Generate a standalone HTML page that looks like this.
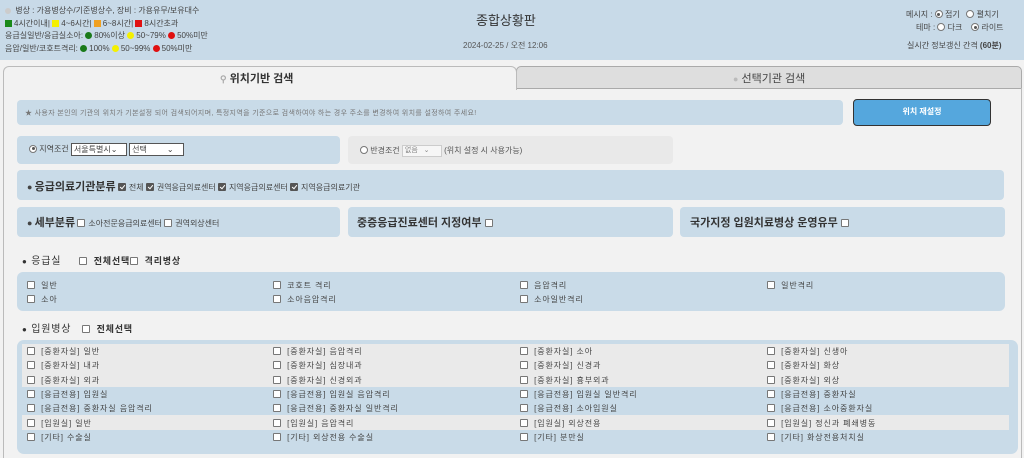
<!DOCTYPE html><html><head><meta charset="utf-8"><style>
*{box-sizing:border-box;margin:0;padding:0}
body{width:1024px;height:458px;overflow:hidden;background:#f2f2f2;font-family:"Liberation Sans","Noto Sans CJK KR",sans-serif;color:#333;position:relative}
.a{position:absolute;white-space:nowrap}
.hdr{position:absolute;left:0;top:0;width:1024px;height:60px;background:#c8dae8}
.s{font-size:8px;color:#444}
.box{position:absolute;background:#c9dbe8;border-radius:4px}
.cb{display:inline-block;width:8px;height:8px;border:1px solid #777;background:#fff;border-radius:1px;vertical-align:-1px;margin-right:3px;position:relative}
.ck{background:#555;border-color:#555}
.ck::after{content:"";position:absolute;left:2px;top:0px;width:2px;height:4px;border:solid #fff;border-width:0 1px 1px 0;transform:rotate(40deg)}
.rd{display:inline-block;width:8px;height:8px;border:1px solid #777;border-radius:50%;background:#fff;vertical-align:-1px;position:relative}
.rd.on::after{content:"";position:absolute;left:1.5px;top:1.5px;width:3px;height:3px;border-radius:50%;background:#555}
.dot{display:inline-block;width:7px;height:7px;border-radius:50%;vertical-align:-1px;margin-right:2px}
.sq{display:inline-block;width:7px;height:7px;vertical-align:-1px;margin-right:2px}
.row{position:absolute;left:22px;width:987px;height:14.3px;font-size:8px;color:#444;letter-spacing:0.9px}
.row span{position:absolute;top:2px}
</style></head><body>
<div class="hdr"></div>
<div class="a s" style="left:5px;top:5px"><span class="dot" style="background:#ccc;width:6px;height:6px"></span> 병상 : 가용병상수/기준병상수, 장비 : 가용유무/보유대수</div>
<div class="a s" style="left:5px;top:18px"><span class="sq" style="background:#1a8a1a"></span>4시간이내| <span class="sq" style="background:#f4f000"></span>4~6시간| <span class="sq" style="background:#f0a020"></span>6~8시간| <span class="sq" style="background:#e01010"></span>8시간초과</div>
<div class="a s" style="left:5px;top:30px">응급실일반/응급실소아: <span class="dot" style="background:#1a7a1a"></span>80%이상 <span class="dot" style="background:#f4f000"></span>50~79% <span class="dot" style="background:#e01010"></span>50%미만</div>
<div class="a s" style="left:5px;top:43px">음압/일반/코호트격리: <span class="dot" style="background:#1a7a1a"></span>100% <span class="dot" style="background:#f4f000"></span>50~99% <span class="dot" style="background:#e01010"></span>50%미만</div>
<div class="a" style="left:476px;top:10px;font-size:13px;color:#333">종합상황판</div>
<div class="a" style="left:463px;top:40px;font-size:8px;color:#555">2024-02-25 / 오전 12:06</div>
<div class="a s" style="left:906px;top:9px">메시지 : <span class="rd on"></span> 접기 &nbsp; <span class="rd"></span> 펼치기</div>
<div class="a s" style="left:916px;top:22px">테마 : <span class="rd"></span> 다크 &nbsp;&nbsp; <span class="rd on"></span> 라이트</div>
<div class="a s" style="left:907px;top:40px">실시간 정보갱신 간격 <b>(60분)</b></div>
<!-- tabs -->
<div class="a" style="left:516px;top:66px;width:506px;height:23px;background:#dedede;border:1px solid #aaa;border-radius:5px 5px 0 0"></div>
<div class="a" style="left:3px;top:88px;width:1019px;height:370px;border-left:1px solid #bbb;border-right:1px solid #bbb"></div>
<div class="a" style="left:3px;top:66px;width:514px;height:24px;background:#f2f2f2;border:1px solid #bbb;border-bottom:none;border-radius:6px 6px 0 0"></div>
<div class="a" style="left:220px;top:70px;font-size:11px;font-weight:bold;color:#333"><span style="color:#aaa;font-size:9px">⚲</span> 위치기반 검색</div>
<div class="a" style="left:733px;top:70px;font-size:11px;color:#444"><span style="color:#bbb;font-size:9px">●</span> 선택기관 검색</div>
<div class="box" style="left:17px;top:100px;width:826px;height:25px"></div>
<div class="a" style="left:25px;top:108px;font-size:7px;color:#777;letter-spacing:0.35px">★ 사용자 본인의 기관의 위치가 기본설정 되어 검색되어지며, 특정지역을 기준으로 검색하여야 하는 경우 주소를 변경하여 위치를 설정하여 주세요!</div>
<div class="a" style="left:853px;top:99px;width:138px;height:27px;background:#55a7dd;border:1.5px solid #333;border-radius:4px;color:#fff;font-size:8px;font-weight:bold;text-align:center;line-height:24px">위치 재설정</div>
<div class="box" style="left:17px;top:136px;width:323px;height:28px"></div>
<div class="a" style="left:29px;top:143px;font-size:8px;color:#444"><span class="rd on"></span> 지역조건 <span style="display:inline-block;width:56px;height:13px;border:1px solid #555;background:#fff;vertical-align:middle;font-size:8px;padding-left:2px;line-height:11px">서울특별시⌄</span> <span style="display:inline-block;width:55px;height:13px;border:1px solid #555;background:#fff;vertical-align:middle;font-size:8px;padding-left:2px;line-height:11px">선택 &nbsp;&nbsp;&nbsp;&nbsp;&nbsp;&nbsp;&nbsp;&nbsp;⌄</span></div>
<div class="box" style="left:348px;top:136px;width:325px;height:28px;background:#e9e9e9"></div>
<div class="a" style="left:360px;top:145px;font-size:8px;color:#555"><span class="rd"></span> 반경조건 <span style="display:inline-block;width:40px;height:12px;border:1px solid #ccc;background:#f6f6f6;vertical-align:middle;font-size:7px;color:#888;padding-left:2px;line-height:10px">없음 &nbsp;&nbsp;⌄</span> (위치 설정 시 사용가능)</div>
<div class="box" style="left:17px;top:170px;width:987px;height:30px"></div>
<div class="a" style="left:27px;top:178px;font-size:8px;color:#444"><span style="font-size:9px">●</span> <b style="font-size:11px;color:#333">응급의료기관분류</b> <span class="cb ck"></span>전체 <span class="cb ck"></span>권역응급의료센터 <span class="cb ck"></span>지역응급의료센터 <span class="cb ck"></span>지역응급의료기관</div>
<div class="box" style="left:17px;top:207px;width:323px;height:30px"></div>
<div class="a" style="left:27px;top:214px;font-size:8px;color:#444"><span style="font-size:9px">●</span> <b style="font-size:11px;color:#333">세부분류</b> <span class="cb"></span>소아전문응급의료센터 <span class="cb"></span>권역외상센터</div>
<div class="box" style="left:348px;top:207px;width:325px;height:30px"></div>
<div class="a" style="left:357px;top:214px;font-size:11px;font-weight:bold;color:#333">중증응급진료센터 지정여부 <span class="cb"></span></div>
<div class="box" style="left:680px;top:207px;width:325px;height:30px"></div>
<div class="a" style="left:690px;top:214px;font-size:11px;font-weight:bold;color:#333">국가지정 입원치료병상 운영유무 <span class="cb"></span></div>
<div class="a" style="left:22px;top:252px;font-size:10px;color:#333;letter-spacing:0.8px"><span style="font-size:8px">●</span> 응급실 &nbsp;&nbsp;&nbsp;&nbsp;<span class="cb"></span> <b style="font-size:9px">전체선택</b><span class="cb"></span> <b style="font-size:9px">격리병상</b></div>
<div class="box" style="left:17px;top:272px;width:988px;height:39px;border-radius:6px"></div>
<div class="row" style="top:278px"><span style="left:5px"><i class="cb"></i> 일반</span><span style="left:251px"><i class="cb"></i> 코호트 격리</span><span style="left:498px"><i class="cb"></i> 음압격리</span><span style="left:745px"><i class="cb"></i> 일반격리</span></div>
<div class="row" style="top:292px"><span style="left:5px"><i class="cb"></i> 소아</span><span style="left:251px"><i class="cb"></i> 소아음압격리</span><span style="left:498px"><i class="cb"></i> 소아일반격리</span></div>
<div class="a" style="left:22px;top:320px;font-size:10px;color:#333;letter-spacing:0.8px"><span style="font-size:8px">●</span> 입원병상 &nbsp;&nbsp;<span class="cb"></span> <b style="font-size:9px">전체선택</b></div>
<div class="box" style="left:17px;top:340px;width:1001px;height:114px;border-radius:7px"></div>
<div class="a" style="left:22px;top:344px;width:987px;height:43px;background:#eaeaea"></div>
<div class="a" style="left:22px;top:415px;width:987px;height:15px;background:#eaeaea"></div>
<div class="row" style="top:344px"><span style="left:5px"><i class="cb"></i> [중환자실] 일반</span><span style="left:251px"><i class="cb"></i> [중환자실] 음압격리</span><span style="left:498px"><i class="cb"></i> [중환자실] 소아</span><span style="left:745px"><i class="cb"></i> [중환자실] 신생아</span></div>
<div class="row" style="top:358.3px"><span style="left:5px"><i class="cb"></i> [중환자실] 내과</span><span style="left:251px"><i class="cb"></i> [중환자실] 심장내과</span><span style="left:498px"><i class="cb"></i> [중환자실] 신경과</span><span style="left:745px"><i class="cb"></i> [중환자실] 화상</span></div>
<div class="row" style="top:372.6px"><span style="left:5px"><i class="cb"></i> [중환자실] 외과</span><span style="left:251px"><i class="cb"></i> [중환자실] 신경외과</span><span style="left:498px"><i class="cb"></i> [중환자실] 흉부외과</span><span style="left:745px"><i class="cb"></i> [중환자실] 외상</span></div>
<div class="row" style="top:386.9px"><span style="left:5px"><i class="cb"></i> [응급전용] 입원실</span><span style="left:251px"><i class="cb"></i> [응급전용] 입원실 음압격리</span><span style="left:498px"><i class="cb"></i> [응급전용] 입원실 일반격리</span><span style="left:745px"><i class="cb"></i> [응급전용] 중환자실</span></div>
<div class="row" style="top:401.2px"><span style="left:5px"><i class="cb"></i> [응급전용] 중환자실 음압격리</span><span style="left:251px"><i class="cb"></i> [응급전용] 중환자실 일반격리</span><span style="left:498px"><i class="cb"></i> [응급전용] 소아입원실</span><span style="left:745px"><i class="cb"></i> [응급전용] 소아중환자실</span></div>
<div class="row" style="top:415.5px"><span style="left:5px"><i class="cb"></i> [입원실] 일반</span><span style="left:251px"><i class="cb"></i> [입원실] 음압격리</span><span style="left:498px"><i class="cb"></i> [입원실] 외상전용</span><span style="left:745px"><i class="cb"></i> [입원실] 정신과 폐쇄병동</span></div>
<div class="row" style="top:429.8px"><span style="left:5px"><i class="cb"></i> [기타] 수술실</span><span style="left:251px"><i class="cb"></i> [기타] 외상전용 수술실</span><span style="left:498px"><i class="cb"></i> [기타] 분만실</span><span style="left:745px"><i class="cb"></i> [기타] 화상전용처치실</span></div>
</body></html>
